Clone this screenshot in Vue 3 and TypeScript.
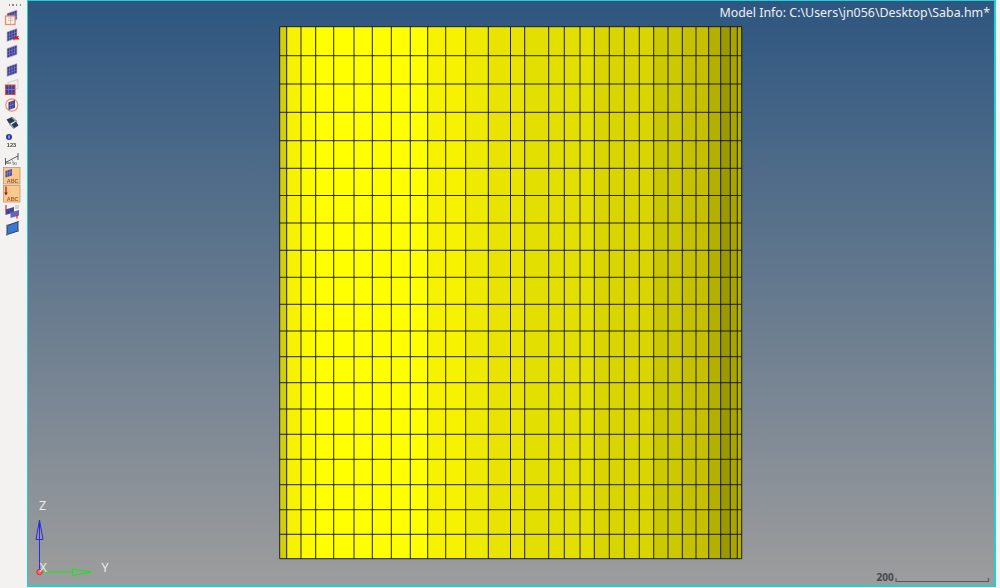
<script setup lang="ts">
const xs = [279.7,286.7,301,315.7,333.7,354,372.3,391.3,410.3,427.7,445.7,465.7,488.3,510.5,524.7,548.7,564.3,580,594.3,609.3,624.3,639.3,653.7,668,682.3,696,708.7,720.7,730.3,737.3,741.7]
const ys = [26.7,55.7,84,112.3,140.7,168.3,195.5,223,250.3,277.3,304.3,331,356.7,382.7,409,434.3,459.3,484.7,509.7,534.3,558.7]
const bands = [
  { x: 279.7, x2: 286.7, c: '#d2ce0c' },
  { x: 286.7, x2: 301, c: '#f6f200' },
  { x: 301, x2: 315.7, c: '#fdfb00' },
  { x: 315.7, x2: 427.7, c: '#ffff00' },
  { x: 427.7, x2: 465.7, c: '#f6f200' },
  { x: 465.7, x2: 488.3, c: '#eeea00' },
  { x: 488.3, x2: 524.7, c: '#e8e400' },
  { x: 524.7, x2: 594.3, c: '#e3df00' },
  { x: 594.3, x2: 653.7, c: '#d9d500' },
  { x: 653.7, x2: 682.3, c: '#cdc900' },
  { x: 682.3, x2: 708.7, c: '#c5c100' },
  { x: 708.7, x2: 720.7, c: '#b4b000' },
  { x: 720.7, x2: 730.3, c: '#9c9800' },
  { x: 730.3, x2: 737.3, c: '#a8a400' },
  { x: 737.3, x2: 741.7, c: '#b4b000' },
]
const top = ys[0]
const bottom = ys[ys.length - 1]
const left = xs[0]
const right = xs[xs.length - 1]
</script>

<template>
  <div class="app">
    <aside class="toolbar">
      <div class="grip"><i></i><i></i><i></i><i></i></div>
      <svg class="defs" width="0" height="0">
        <defs>
          <g id="flag">
            <path d="M0 3.5 10 0V9.5L0 13Z" fill="#3b3e92" stroke="#c2c2cc" stroke-width=".7" />
            <path d="M2.5 2.6V12M5 1.8V11.2M7.5 .9V10.3M0 7 10 3.5M0 10 10 6.5" stroke="#8f8fcc" stroke-width=".5" fill="none" />
          </g>
        </defs>
      </svg>
      <div class="tool">
        <svg viewBox="0 0 27 17.6"><use href="#flag" transform="translate(7 1)" /><rect x="5.5" y="7" width="9.5" height="8.5" fill="#f4f0ea" stroke="#ee8a72" stroke-width="1.3" /><path d="M8 9H13M8 11.5H13M10.5 8V15" stroke="#aaa" stroke-width=".6" /></svg>
      </div>
      <div class="tool">
        <svg viewBox="0 0 27 17.6"><use href="#flag" transform="translate(7 1.5)" /><path d="M13 11 19 8.5 18 10.5 19.5 12.5 14.5 12.5 14 14Z" fill="#e01818" /></svg>
      </div>
      <div class="tool">
        <svg viewBox="0 0 27 17.6"><use href="#flag" transform="translate(7 1)" /></svg>
      </div>
      <div class="tool">
        <svg viewBox="0 0 27 17.6"><use href="#flag" transform="translate(7 1.5)" /></svg>
      </div>
      <div class="tool">
        <svg viewBox="0 0 27 17.6"><path d="M8 3.5 18 .5V9.5L8 13Z" fill="#eee" stroke="#bbb" stroke-width=".6" /><path d="M5.6 6H15V15.5H5.6Z" fill="#3b3e92" stroke="#e8482e" stroke-width="1.1" /><path d="M8.7 6V15.5M11.8 6V15.5M5.6 10.5H15" stroke="#8f8fcc" stroke-width=".6" /></svg>
      </div>
      <div class="tool">
        <svg viewBox="0 0 27 17.6"><circle cx="11.8" cy="8" r="6.1" fill="#f6ece8" stroke="#ee8a72" stroke-width="1.1" /><path d="M8.5 5.2 15 3V10.8L8.5 13Z" fill="#3b3e92" /><path d="M10.6 4.5V12.3M12.8 3.8V11.5M8.5 9 15 6.8" stroke="#8f8fcc" stroke-width=".5" /></svg>
      </div>
      <div class="tool">
        <svg viewBox="0 0 27 17.6"><path d="M6.5 4.5 12 2 15 6 9.5 9Z" fill="#2a3a52" /><path d="M11.5 9.5 16 6.5 18.5 10.5 14 13.5Z" fill="#2a3a52" /><path d="M12 2.5 17 6.5M9.5 9 14 13.5" stroke="#8d97a5" stroke-width="1.4" /></svg>
      </div>
      <div class="tool">
        <svg viewBox="0 0 27 17.6"><circle cx="9" cy="5" r="3" fill="#2a36b0" /><path d="M9 3.4V6.6" stroke="#fff" stroke-width=".9" /><text x="6.8" y="14.6" class="mini">123</text></svg>
      </div>
      <div class="tool">
        <svg viewBox="0 0 27 17.6"><path d="M5.5 12.5 18 6M18 3V10M5.5 8V15M5.5 13H11" stroke="#444a58" stroke-width=".9" fill="none" /><path d="M11.5 9.5Q13.5 11 13 12.5" stroke="#777" stroke-width=".6" fill="none" /><text x="12.3" y="14.8" class="deg">90</text></svg>
      </div>
      <div class="tool">
        <svg viewBox="0 0 27 17.6"><rect x="3.5" y=".5" width="16.5" height="16.5" fill="#fbc98a" stroke="#ba9a78" stroke-width=".8" /><path d="M5.5 4 12 2V8.5L5.5 10.5Z" fill="#4a4c9c" /><path d="M7.6 3.4V9.8M9.8 2.7V9.2M5.5 7 12 5" stroke="#a2a2d4" stroke-width=".5" /><text x="6.8" y="15.6" class="abc">ABC</text></svg>
      </div>
      <div class="tool">
        <svg viewBox="0 0 27 17.6"><rect x="3.5" y=".5" width="16.5" height="16.5" fill="#fbc98a" stroke="#ba9a78" stroke-width=".8" /><path d="M6 1.5V8" stroke="#d81818" stroke-width="1.4" /><path d="M4.3 7.5H7.7L6 10.5Z" fill="#901010" /><text x="6.8" y="15.6" class="abc">ABC</text></svg>
      </div>
      <div class="tool">
        <svg viewBox="0 0 27 17.6"><path d="M5.5 6.5 14 4V9.5L5.5 12Z" fill="#45479c" /><path d="M10.5 9.5 19 7V12.5L10.5 15Z" fill="#6466b0" /><path d="M15 3H19M15 5H19" stroke="#999" stroke-width=".7" /><path d="M6 2V7" stroke="#e01818" stroke-width="1.1" /><path d="M17 12V15.5" stroke="#e01818" stroke-width="1.2" /></svg>
      </div>
      <div class="tool">
        <svg viewBox="0 0 27 17.6"><path d="M7 5.5 18 1.8V11L7 14.6Z" fill="#3a78d8" stroke="#25304a" stroke-width=".9" /><circle cx="7" cy="14.6" r="1.1" fill="#777" /><circle cx="18" cy="1.8" r="1.1" fill="#777" /><circle cx="7" cy="5.5" r=".9" fill="#777" /><circle cx="18" cy="11" r=".9" fill="#777" /></svg>
      </div>
    </aside>

    <main class="viewport">
      <svg class="scene" viewBox="28 1 966 584">
        <rect v-for="b in bands" :key="b.x" :x="b.x" :y="top" :width="b.x2 - b.x" :height="bottom - top" :fill="b.c" />
        <line v-for="x in xs" :key="'v' + x" :x1="x" :x2="x" :y1="top" :y2="bottom" class="edge" />
        <line v-for="y in ys" :key="'h' + y" :x1="left" :x2="right" :y1="y" :y2="y" class="edge" />

        <line x1="39.5" y1="572" x2="39.5" y2="521" stroke="#2a2ae0" stroke-width="1" />
        <path d="M39.5 520 43 539.5H36Z" fill="none" stroke="#2a2ae0" stroke-width="1" />
        <line x1="39.5" y1="572" x2="72" y2="572" stroke="#14e814" stroke-width="1" />
        <path d="M72.5 569H73L91.5 572 73 575.5H72.5Z" fill="none" stroke="#14e814" stroke-width="1" />
        <circle cx="39.5" cy="572" r="2.7" fill="#f06a6a" stroke="#e81818" stroke-width=".8" />
        <text x="39" y="510" class="axis">Z</text>
        <text x="39.5" y="572" class="axis">X</text>
        <text x="101.5" y="572" class="axis">Y</text>

        <text x="876.5" y="581" class="scale-label">200</text>
        <path d="M896 578V581.5H988.5V578" fill="none" stroke="#55585c" stroke-width="1.2" />
      </svg>
      <p class="info">Model Info: C:\Users\jn056\Desktop\Saba.hm*</p>
    </main>
  </div>
</template>

<style scoped>
.app {
  display: flex;
  width: 1000px;
  height: 588px;
  background: #f5f5f5;
  overflow: hidden;
}
.toolbar {
  flex: 0 0 27px;
  display: flex;
  flex-direction: column;
  padding-top: 9px;
  box-sizing: border-box;
  background: #f3f2f0;
}
.grip {
  position: absolute;
  top: 4px;
  left: 8.5px;
  display: flex;
  gap: 2.4px;
}
.grip i {
  width: 1.4px;
  height: 2px;
  background: #888;
}
.defs {
  position: absolute;
}
.tool {
  flex: 0 0 17.6px;
  height: 17.6px;
}
.tool svg {
  display: block;
  width: 27px;
  height: 17.6px;
  overflow: visible;
  filter: blur(0.3px);
}
.mini {
  font: 700 5.6px "Liberation Sans", sans-serif;
  fill: #444;
}
.deg {
  font: 400 4.2px "Liberation Sans", sans-serif;
  fill: #444;
}
.abc {
  font: 700 5.4px "Liberation Sans", sans-serif;
  fill: #a5522e;
}
.viewport {
  position: relative;
  flex: 0 0 969px;
  height: 587px;
  box-sizing: border-box;
  border-style: solid;
  border-color: #1fd0d4;
  border-width: 1px 2px 2px 1px;
  background: linear-gradient(180deg, #2e5680 0%, #9d9d9d 100%);
}
.scene {
  position: absolute;
  inset: 0;
  width: 966px;
  height: 584px;
}
.edge {
  stroke: #101010;
  stroke-opacity: 0.9;
  stroke-width: 1;
  fill: none;
}
.axis {
  font: 400 12.5px "Noto Sans", sans-serif;
  fill: #ececec;
}
.scale-label {
  font: 700 10px "Noto Sans", sans-serif;
  fill: #45484c;
}
.info {
  position: relative;
  margin: 4px 4px 0 0;
  text-align: right;
  font: 400 12.4px "Noto Sans", sans-serif;
  line-height: 16px;
  color: #eef1f4;
  white-space: nowrap;
}
</style>
